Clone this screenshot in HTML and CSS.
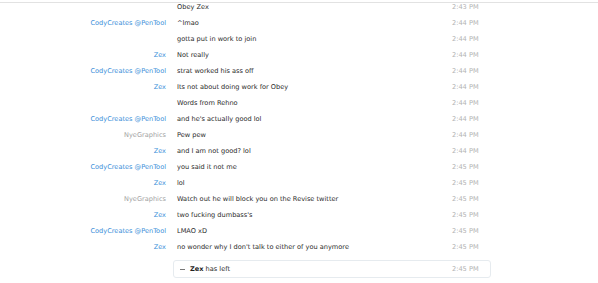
FILE: index.html
```html
<!DOCTYPE html>
<html>
<head>
<meta charset="utf-8">
<link rel="stylesheet" href="styles.css">
</head>
<body>
<div class="topline"></div>
<div class="log">
  <div class="row"><span class="name"></span><span class="msg">Obey Zex</span><span class="time">2:43 PM</span></div>
  <div class="row"><span class="name cody">CodyCreates @PenTool</span><span class="msg">^lmao</span><span class="time">2:44 PM</span></div>
  <div class="row"><span class="name"></span><span class="msg">gotta put in work to join</span><span class="time">2:44 PM</span></div>
  <div class="row"><span class="name zex">Zex</span><span class="msg">Not really</span><span class="time">2:44 PM</span></div>
  <div class="row"><span class="name cody">CodyCreates @PenTool</span><span class="msg">strat worked his ass off</span><span class="time">2:44 PM</span></div>
  <div class="row"><span class="name zex">Zex</span><span class="msg">Its not about doing work for Obey</span><span class="time">2:44 PM</span></div>
  <div class="row"><span class="name"></span><span class="msg">Words from Rehno</span><span class="time">2:44 PM</span></div>
  <div class="row"><span class="name cody">CodyCreates @PenTool</span><span class="msg">and he's actually good lol</span><span class="time">2:44 PM</span></div>
  <div class="row"><span class="name nye">NyeGraphics</span><span class="msg">Pew pew</span><span class="time">2:44 PM</span></div>
  <div class="row"><span class="name zex">Zex</span><span class="msg">and I am not good? lol</span><span class="time">2:44 PM</span></div>
  <div class="row"><span class="name cody">CodyCreates @PenTool</span><span class="msg">you said it not me</span><span class="time">2:45 PM</span></div>
  <div class="row"><span class="name zex">Zex</span><span class="msg">lol</span><span class="time">2:45 PM</span></div>
  <div class="row"><span class="name nye">NyeGraphics</span><span class="msg">Watch out he will block you on the Revise twitter</span><span class="time">2:45 PM</span></div>
  <div class="row"><span class="name zex">Zex</span><span class="msg">two fucking dumbass's</span><span class="time">2:45 PM</span></div>
  <div class="row"><span class="name cody">CodyCreates @PenTool</span><span class="msg">LMAO xD</span><span class="time">2:45 PM</span></div>
  <div class="row"><span class="name zex">Zex</span><span class="msg">no wonder why I don't talk to either of you anymore</span><span class="time">2:45 PM</span></div>
  <div class="event">
    <span class="dash"></span><span class="event-text"><b>Zex</b> has left</span><span class="time">2:45 PM</span>
  </div>
</div>
</body>
</html>
```
FILE: styles.css
```css
html, body {
  margin: 0;
  padding: 0;
  background: #fff;
}
body {
  font-family: "DejaVu Sans", Tahoma, sans-serif;
  font-size: 6.6px;
  color: #333;
  width: 598px;
  height: 283px;
  overflow: hidden;
}
.topline {
  height: 2px;
  border-bottom: 1px solid #e2e2e2;
}
.log {
  margin-top: -4px;
}
.row {
  display: grid;
  grid-template-columns: 166px 264px 60px;
  column-gap: 11px;
  height: 16px;
  align-items: center;
  line-height: 16px;
}
.name {
  text-align: right;
  white-space: nowrap;
}
.cody, .zex { color: #3b8fd9; }
.nye { color: #a3a3a3; }
.msg {
  white-space: nowrap;
  color: #2b2b2b;
}
.time {
  color: #b3b3b3;
}
.event {
  margin: 5px 0 0 173px;
  width: 316px;
  height: 16px;
  border: 1px solid #e6ebef;
  border-radius: 3px;
  display: flex;
  align-items: center;
}
.dash {
  width: 5px;
  height: 1px;
  background: #777;
  margin-left: 6px;
  margin-right: 5px;
}
.event-text {
  width: 262px;
  color: #2b2b2b;
}
.event-text b {
  color: #222;
}
```
